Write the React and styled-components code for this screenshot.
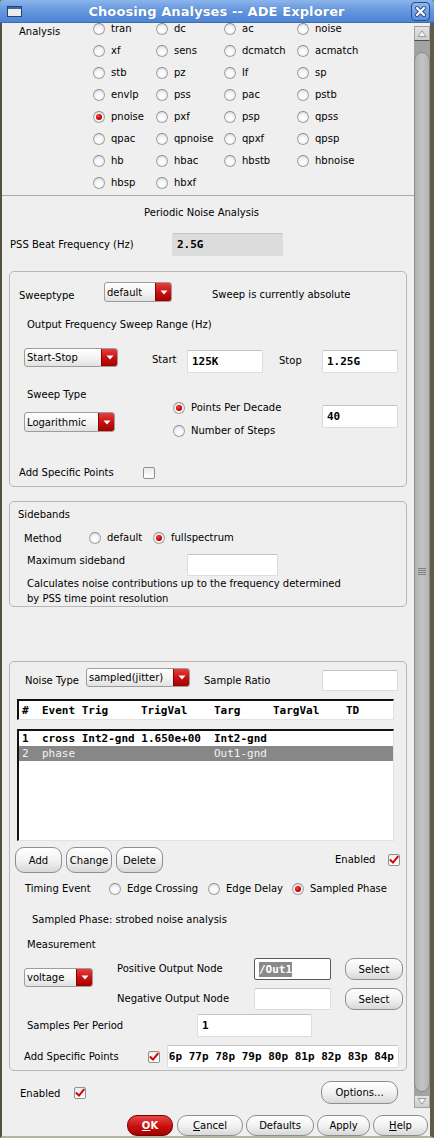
import React from 'react'
import styled, { createGlobalStyle } from 'styled-components'

const GlobalStyle = createGlobalStyle`
  html, body {
    margin: 0;
    padding: 0;
    background: #6d8c44;
  }
  body {
    font-family: "DejaVu Sans", "Liberation Sans", sans-serif;
    font-size: 10px;
    color: #000;
  }
  * { box-sizing: border-box; }
`

const Frame = styled.div`
  width: 434px;
  height: 1138px;
  display: flex;
  flex-direction: column;
  overflow: hidden;
`

const TitleBar = styled.div`
  height: 23px;
  flex-shrink: 0;
  display: flex;
  align-items: center;
  padding: 0 4px 0 7px;
  border-radius: 4px 4px 0 0;
  background: linear-gradient(#8cb5eb 0%, #6a9be0 40%, #4d84d4 100%);
  border-bottom: 1px solid #3b6cb6;
`

const TitleText = styled.div`
  flex: 1;
  text-align: center;
  color: #fff;
  font-weight: bold;
  font-size: 13px;
  letter-spacing: 0.1px;
  text-shadow: 0 0 1px rgba(30, 60, 120, 0.5);
`

const CloseBox = styled.div`
  width: 19px;
  height: 19px;
  border: 1px solid #2b4d86;
  border-radius: 4px;
  background: linear-gradient(#8fb7ee, #5b8fdc);
  display: flex;
  align-items: center;
  justify-content: center;
`

const Client = styled.div`
  flex: 1;
  display: flex;
  flex-direction: column;
  background: #efefef;
  border-left: 2px solid #55503f;
  border-right: 4px solid #625b4b;
  border-bottom: 2px solid #b9b19f;
`

const ScrollArea = styled.div`
  height: 1085px;
  flex-shrink: 0;
  display: flex;
`

const Viewport = styled.div`
  flex: 1;
  overflow: hidden;
`

const Content = styled.div`
  margin-top: -5px;
  display: flex;
  flex-direction: column;
`

const ScrollBar = styled.div`
  width: 16px;
  display: flex;
  flex-direction: column;
  padding-top: 3px;
`

const ArrowBox = styled.div`
  height: ${p => p.$h}px;
  display: flex;
  align-items: center;
  justify-content: center;
  background: linear-gradient(#e4e4e4, #cdcdcd);
  border: 1px solid #a2a2a2;
  border-bottom: 1px solid ${p => (p.$up ? '#4d4d4d' : '#a2a2a2')};
`

const Track = styled.div`
  flex: 1;
  display: flex;
  padding: 11px 0 3px;
  background: #a3a3a3;
`

const Thumb = styled.div`
  flex: 1;
  display: flex;
  align-items: center;
  justify-content: center;
  border: 1px solid #8a8a8a;
  border-radius: 8px;
  background: linear-gradient(90deg, #b2b2b2, #c3c3c3 50%, #b4b4b4);
`

const ButtonBar = styled.div`
  flex: 1;
  display: flex;
  justify-content: flex-end;
  align-items: flex-start;
  padding: 7px 2px 0 0;
`

const Row = styled.div`
  display: flex;
  flex-shrink: 0;
  align-items: ${p => p.$align || 'flex-start'};
  justify-content: ${p => p.$justify || 'flex-start'};
  margin-top: ${p => p.$mt || 0}px;
  padding-left: ${p => p.$pl || 0}px;
  padding-right: ${p => p.$pr || 0}px;
  height: ${p => (p.$h ? p.$h + 'px' : 'auto')};
`

const Text = styled.span`
  display: block;
  flex-shrink: 0;
  width: ${p => (p.$w ? p.$w + 'px' : 'auto')};
  margin-top: ${p => p.$mt || 0}px;
  margin-left: ${p => p.$ml || 0}px;
  line-height: ${p => p.$lh || 12}px;
  white-space: nowrap;
`

const Divider = styled.div`
  height: 1px;
  margin-top: 1px;
  background: #a9a9a9;
`

const Group = styled.div`
  margin: ${p => p.$mt}px 7px 0;
  padding-bottom: ${p => p.$pb || 0}px;
  border: 1px solid #b8b8b8;
  border-radius: 5px;
  display: flex;
  flex-direction: column;
`

const AnalysisBlock = styled.div`
  display: flex;
  padding-left: 17px;
`

const RadioGrid = styled.div`
  display: grid;
  grid-template-columns: 63px 68px 73px 1fr;
  grid-auto-rows: 22px;
  align-items: center;
`

const Field = styled.div`
  flex-shrink: 0;
  width: ${p => p.$w}px;
  height: ${p => p.$h || 23}px;
  margin-top: ${p => p.$mt || 0}px;
  margin-left: ${p => p.$ml || 0}px;
  display: flex;
  align-items: center;
  justify-content: ${p => (p.$end ? 'flex-end' : 'flex-start')};
  padding: 0 4px;
  overflow: hidden;
  background: ${p => (p.$disabled ? '#dcdcdc' : '#fff')};
  border: 1px solid ${p => (p.$focus ? '#5a5a5a' : '#dcdcdc')};
  border-top-color: ${p => (p.$focus ? '#5a5a5a' : '#c2c2c2')};
  border-radius: 2px;
  font-family: "DejaVu Sans Mono", "Liberation Mono", monospace;
  font-weight: bold;
  font-size: 11px;
  white-space: nowrap;
`

const Selected = styled.span`
  background: #8a8a8a;
  color: #fff;
  padding: 1px 0;
`

const Combo = styled.div`
  flex-shrink: 0;
  display: flex;
  width: ${p => p.$w}px;
  height: ${p => p.$h || 20}px;
  margin-top: ${p => p.$mt || 0}px;
  margin-left: ${p => p.$ml || 0}px;
  border: 1px solid #9c9c9c;
  border-radius: 3px;
  overflow: hidden;
  background: linear-gradient(#ffffff, #f4f4f4 50%, #e1e1e1);
`

const ComboValue = styled.span`
  flex: 1;
  display: flex;
  align-items: center;
  padding-left: 2px;
  white-space: nowrap;
  overflow: hidden;
`

const ComboArrow = styled.span`
  width: 16px;
  display: flex;
  align-items: center;
  justify-content: center;
  border-left: 1px solid #8c0000;
  background: linear-gradient(#e64040, #c81212 50%, #a40000);
`

const RadioItem = styled.span`
  display: flex;
  align-items: center;
  gap: 6px;
  flex-shrink: 0;
  width: ${p => (p.$w ? p.$w + 'px' : 'auto')};
  height: 12px;
  margin-top: ${p => p.$mt || 0}px;
  line-height: 12px;
  white-space: nowrap;
`

const RadioDot = styled.span`
  width: 12px;
  height: 12px;
  flex-shrink: 0;
  border-radius: 50%;
  border: 1px solid #a3a3a3;
  border-top-color: #8a8a8a;
  background: radial-gradient(circle at 50% 65%, #ffffff 0%, #f6f6f6 45%, #cfcfcf 100%);
  display: flex;
  align-items: center;
  justify-content: center;

  &::after {
    content: '';
    display: ${p => (p.$on ? 'block' : 'none')};
    width: 6px;
    height: 6px;
    border-radius: 50%;
    background: radial-gradient(circle at 40% 35%, #ff4545, #d00000 55%, #6a0000);
  }
`

const RadioColumn = styled.div`
  display: flex;
  flex-direction: column;
  gap: 11px;
  width: ${p => p.$w}px;
  margin-left: ${p => p.$ml}px;
  margin-top: ${p => p.$mt || 0}px;
  flex-shrink: 0;
`

const Check = styled.span`
  width: 12px;
  height: 12px;
  flex-shrink: 0;
  margin-left: ${p => p.$ml || 0}px;
  border: 1px solid #8f8f8f;
  border-radius: 2px;
  background: linear-gradient(#ececec, #ffffff);
  display: flex;
  align-items: center;
  justify-content: center;
`

const Button = styled.div`
  flex-shrink: 0;
  width: ${p => p.$w}px;
  height: ${p => p.$h || 21}px;
  margin-left: ${p => p.$ml || 0}px;
  display: flex;
  align-items: center;
  justify-content: center;
  border: 1px solid ${p => (p.$primary ? '#7a0000' : '#8e8e8e')};
  border-radius: ${p => p.$r || 10}px;
  background: ${p =>
    p.$primary
      ? 'linear-gradient(#e84444, #c81010 55%, #a40000)'
      : 'linear-gradient(#ffffff, #f2f2f2 50%, #d8d8d8)'};
  color: ${p => (p.$primary ? '#fff' : '#000')};
  font-weight: ${p => (p.$primary ? 'bold' : 'normal')};
  white-space: nowrap;
`

const TableBox = styled.div`
  flex-shrink: 0;
  margin: ${p => p.$mt}px 0 0 7px;
  width: 377px;
  height: ${p => p.$h}px;
  background: #fff;
  border-style: solid;
  border-width: 2px 1px 1px 2px;
  border-color: #111 #e2e2e2 #e2e2e2 #111;
  font-family: "DejaVu Sans Mono", "Liberation Mono", monospace;
  font-size: 11px;
  overflow: hidden;
`

const TableRow = styled.div`
  display: grid;
  grid-template-columns: 20px 99px 73px 59px 73px 1fr;
  align-items: center;
  height: ${p => p.$h || 15}px;
  padding-left: 3px;
  white-space: nowrap;
  background: ${p => (p.$sel ? '#878787' : 'transparent')};
  color: ${p => (p.$sel ? '#f3f3f3' : '#000')};
  font-weight: ${p => (p.$sel ? 'normal' : 'bold')};
`

const Cell = styled.span`
  grid-column: span ${p => p.$span || 1};
`

const NodeGrid = styled.div`
  display: grid;
  grid-template-columns: 123px 77px 58px;
  grid-template-rows: 22px 22px;
  column-gap: 14px;
  row-gap: 8px;
  align-items: center;
  margin-left: ${p => p.$ml}px;
`

const analyses = [
  'tran', 'dc', 'ac', 'noise',
  'xf', 'sens', 'dcmatch', 'acmatch',
  'stb', 'pz', 'lf', 'sp',
  'envlp', 'pss', 'pac', 'pstb',
  'pnoise', 'pxf', 'psp', 'qpss',
  'qpac', 'qpnoise', 'qpxf', 'qpsp',
  'hb', 'hbac', 'hbstb', 'hbnoise',
  'hbsp', 'hbxf',
]

const Arrow = () => (
  <svg width="8" height="5" viewBox="0 0 8 5">
    <path d="M0.5 0.5 H7.5 L4 4.5 Z" fill="#fff" />
  </svg>
)

const Tick = () => (
  <svg width="10" height="10" viewBox="0 0 10 10">
    <path d="M1.6 5.2 L4 7.6 L8.6 2" fill="none" stroke="#d60000" strokeWidth="2" strokeLinecap="square" />
  </svg>
)

const Radio = ({ on, children, w, mt }) => (
  <RadioItem $w={w} $mt={mt}>
    <RadioDot $on={on} />
    {children}
  </RadioItem>
)

const Dropdown = ({ w, h, mt, ml, children }) => (
  <Combo $w={w} $h={h} $mt={mt} $ml={ml}>
    <ComboValue>{children}</ComboValue>
    <ComboArrow><Arrow /></ComboArrow>
  </Combo>
)

const CheckBox = ({ on, ml }) => (
  <Check $ml={ml}>{on && <Tick />}</Check>
)

const points = []
for (let i = 76; i <= 84; i++) points.push(i + 'p')

export default function App() {
  return (
    <>
      <GlobalStyle />
      <Frame>
        <TitleBar>
          <svg width="15" height="11" viewBox="0 0 15 11">
            <rect x="0.5" y="0.5" width="14" height="10" fill="#ececec" stroke="#22447c" />
            <rect x="1" y="1" width="13" height="2" fill="#3d66a8" />
          </svg>
          <TitleText>Choosing Analyses -- ADE Explorer</TitleText>
          <CloseBox>
            <svg width="13" height="13" viewBox="0 0 13 13">
              <path d="M3 3 L10 10 M10 3 L3 10" stroke="#2a4f8c" strokeWidth="4" strokeLinecap="round" />
              <path d="M3 3 L10 10 M10 3 L3 10" stroke="#fff" strokeWidth="2.2" strokeLinecap="round" />
            </svg>
          </CloseBox>
        </TitleBar>

        <Client>
          <ScrollArea>
            <Viewport>
              <Content>
                <AnalysisBlock>
                  <Text $w={74} $mt={8}>Analysis</Text>
                  <RadioGrid>
                    {analyses.map(a => (
                      <Radio key={a} on={a === 'pnoise'}>{a}</Radio>
                    ))}
                  </RadioGrid>
                </AnalysisBlock>
                <Divider />

                <Row $h={34} $align="center" $justify="center" $pr={13}>
                  <Text>Periodic Noise Analysis</Text>
                </Row>

                <Row $mt={3} $h={23} $pl={8} $align="center">
                  <Text $w={162}>PSS Beat Frequency (Hz)</Text>
                  <Field $w={111} $disabled>2.5G</Field>
                </Row>

                <Group $mt={15} $pb={7}>
                  <Row $mt={10} $pl={9}>
                    <Text $w={85} $mt={8}>Sweeptype</Text>
                    <Dropdown w={68} h={20}>default</Dropdown>
                    <Text $ml={40} $mt={7}>Sweep is currently absolute</Text>
                  </Row>
                  <Row $mt={17} $pl={17}>
                    <Text>Output Frequency Sweep Range (Hz)</Text>
                  </Row>
                  <Row $mt={17} $pl={14}>
                    <Dropdown w={94} h={19}>Start-Stop</Dropdown>
                    <Text $w={35} $ml={34} $mt={6}>Start</Text>
                    <Field $w={76} $mt={2}>125K</Field>
                    <Text $w={43} $ml={16} $mt={7}>Stop</Text>
                    <Field $w={76} $mt={2}>1.25G</Field>
                  </Row>
                  <Row $mt={16} $pl={17}>
                    <Text>Sweep Type</Text>
                  </Row>
                  <Row $pl={14}>
                    <Dropdown w={91} h={20} mt={11}>Logarithmic</Dropdown>
                    <RadioColumn $w={149} $ml={58} $mt={1}>
                      <Radio on>Points Per Decade</Radio>
                      <Radio>Number of Steps</Radio>
                    </RadioColumn>
                    <Field $w={76} $mt={4}>40</Field>
                  </Row>
                  <Row $mt={30} $pl={9} $align="center">
                    <Text $w={124}>Add Specific Points</Text>
                    <CheckBox />
                  </Row>
                </Group>

                <Group $mt={14}>
                  <Row $mt={7} $pl={8}>
                    <Text>Sidebands</Text>
                  </Row>
                  <Row $mt={11} $pl={14}>
                    <Text $w={65} $mt={1}>Method</Text>
                    <Radio w={64}>default</Radio>
                    <Radio on>fullspectrum</Radio>
                  </Row>
                  <Row $mt={9} $pl={17}>
                    <Text $w={160} $mt={1}>Maximum sideband</Text>
                    <Field $w={91} $h={22} />
                  </Row>
                  <Row $pl={17}>
                    <Text $lh={15}>
                      Calculates noise contributions up to the frequency determined
                      <br />
                      by PSS time point resolution
                    </Text>
                  </Row>
                </Group>

                <Group $mt={54} $pb={2}>
                  <Row $mt={6} $pl={15}>
                    <Text $w={61} $mt={7}>Noise Type</Text>
                    <Dropdown w={104} h={19}>sampled(jitter)</Dropdown>
                    <Text $w={118} $ml={14} $mt={7}>Sample Ratio</Text>
                    <Field $w={76} $h={21} $mt={2} />
                  </Row>

                  <TableBox $mt={8} $h={21}>
                    <TableRow $h={18} style={{ fontWeight: 'bold' }}>
                      <Cell>#</Cell>
                      <Cell>Event Trig</Cell>
                      <Cell>TrigVal</Cell>
                      <Cell>Targ</Cell>
                      <Cell>TargVal</Cell>
                      <Cell>TD</Cell>
                    </TableRow>
                  </TableBox>
                  <TableBox $mt={9} $h={112}>
                    <TableRow>
                      <Cell>1</Cell>
                      <Cell $span={2}>cross Int2-gnd 1.650e+00</Cell>
                      <Cell>Int2-gnd</Cell>
                    </TableRow>
                    <TableRow $sel>
                      <Cell>2</Cell>
                      <Cell $span={2}>phase</Cell>
                      <Cell>Out1-gnd</Cell>
                    </TableRow>
                  </TableBox>

                  <Row $mt={6} $h={26} $pl={5} $pr={6} $align="center">
                    <Button $w={47} $h={26} $r={9}>Add</Button>
                    <Button $w={46} $h={26} $r={9} $ml={4}>Change</Button>
                    <Button $w={47} $h={26} $r={9} $ml={4}>Delete</Button>
                    <Text $w={53} style={{ marginLeft: 'auto' }}>Enabled</Text>
                    <CheckBox on />
                  </Row>

                  <Row $mt={10} $pl={15}>
                    <Text $w={84}>Timing Event</Text>
                    <Radio w={99}>Edge Crossing</Radio>
                    <Radio w={84}>Edge Delay</Radio>
                    <Radio on>Sampled Phase</Radio>
                  </Row>
                  <Row $mt={19} $pl={22}>
                    <Text>Sampled Phase: strobed noise analysis</Text>
                  </Row>
                  <Row $mt={13} $pl={17}>
                    <Text>Measurement</Text>
                  </Row>
                  <Row $mt={7} $pl={14}>
                    <Dropdown w={69} h={19} mt={10}>voltage</Dropdown>
                    <NodeGrid $ml={24}>
                      <Text>Positive Output Node</Text>
                      <Field $w={77} $h={22} $focus>
                        <Selected>/Out1</Selected>
                      </Field>
                      <Button $w={58} $h={22} $r={9}>Select</Button>
                      <Text>Negative Output Node</Text>
                      <Field $w={77} $h={22} />
                      <Button $w={58} $h={22} $r={9}>Select</Button>
                    </NodeGrid>
                  </Row>
                  <Row $mt={4} $h={23} $pl={17} $align="center">
                    <Text $w={170}>Samples Per Period</Text>
                    <Field $w={115}>1</Field>
                  </Row>
                  <Row $mt={8} $h={23} $pl={14} $align="center">
                    <Text $w={124}>Add Specific Points</Text>
                    <CheckBox on />
                    <Field $w={232} $ml={7} $end>{points.join(' ')}</Field>
                  </Row>
                </Group>

                <Row $mt={10} $h={23} $pl={18} $pr={16} $align="center">
                  <Text $w={54} $mt={2}>Enabled</Text>
                  <CheckBox on />
                  <Button $w={77} $h={23} $r={10} style={{ marginLeft: 'auto' }}>Options...</Button>
                </Row>
              </Content>
            </Viewport>

            <ScrollBar>
              <ArrowBox $h={15} $up>
                <svg width="10" height="7" viewBox="0 0 10 7">
                  <path d="M1 6.5 L5 0.8 L9 6.5 Z" fill="#f4f4f4" stroke="#9a9a9a" strokeWidth="1" />
                </svg>
              </ArrowBox>
              <Track>
                <Thumb>
                  <svg width="8" height="8" viewBox="0 0 8 8">
                    <path d="M0 0.5 H8 M0 2.5 H8 M0 4.5 H8 M0 6.5 H8" stroke="#7f7f7f" strokeWidth="1" />
                  </svg>
                </Thumb>
              </Track>
              <ArrowBox $h={13}>
                <svg width="10" height="7" viewBox="0 0 10 7">
                  <path d="M1 0.5 L5 6.2 L9 0.5 Z" fill="#f4f4f4" stroke="#9a9a9a" strokeWidth="1" />
                </svg>
              </ArrowBox>
            </ScrollBar>
          </ScrollArea>

          <ButtonBar>
            <Button $w={46} $primary><u>O</u>K</Button>
            <Button $w={66} $ml={4}><u>C</u>ancel</Button>
            <Button $w={68} $ml={3}>Defaults</Button>
            <Button $w={53} $ml={3}>Apply</Button>
            <Button $w={55} $ml={3}><u>H</u>elp</Button>
          </ButtonBar>
        </Client>
      </Frame>
    </>
  )
}
